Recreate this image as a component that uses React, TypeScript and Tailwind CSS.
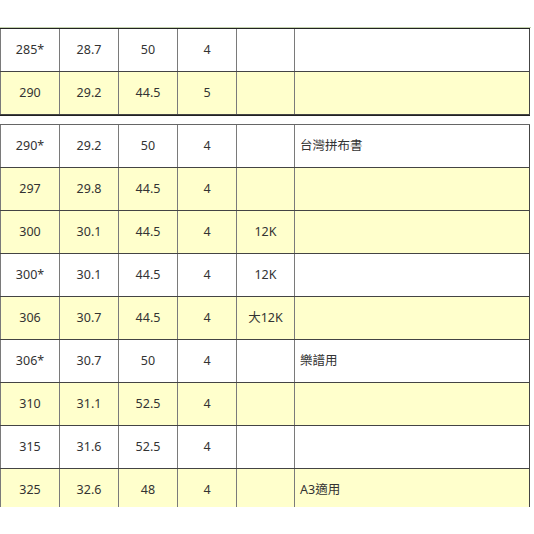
type Row = { cells: string[]; note?: string; yellow?: boolean };

const top: Row[] = [
  { cells: ["285*", "28.7", "50", "4", ""] },
  { cells: ["290", "29.2", "44.5", "5", ""], yellow: true },
];

const rows: Row[] = [
  { cells: ["290*", "29.2", "50", "4", ""], note: "台灣拼布書" },
  { cells: ["297", "29.8", "44.5", "4", ""], yellow: true },
  { cells: ["300", "30.1", "44.5", "4", "12K"], yellow: true },
  { cells: ["300*", "30.1", "44.5", "4", "12K"] },
  { cells: ["306", "30.7", "44.5", "4", "大12K"], yellow: true },
  { cells: ["306*", "30.7", "50", "4", ""], note: "樂譜用" },
  { cells: ["310", "31.1", "52.5", "4", ""], yellow: true },
  { cells: ["315", "31.6", "52.5", "4", ""] },
  { cells: ["325", "32.6", "48", "4", ""], note: "A3適用", yellow: true },
];

function TableRow({ row }: { row: Row }) {
  return (
    <div
      className={`grid h-[43px] grid-cols-[60px_59px_59px_59px_58px_235px] border-b border-[#444] ${
        row.yellow ? "bg-[#ffffcc]" : "bg-white"
      }`}
    >
      {row.cells.map((c, i) => (
        <div
          key={i}
          className={`flex items-center justify-center border-r border-[#7a7a7a] ${i === 0 ? "border-l" : ""}`}
        >
          {c}
        </div>
      ))}
      <div className="flex items-center border-r border-[#444] pl-[5px]">{row.note}</div>
    </div>
  );
}

export default function App() {
  return (
    <div
      className="h-[534px] w-[534px] overflow-hidden bg-white text-[12.5px] text-[#333]"
      style={{ fontFamily: '"Noto Sans", "Noto Sans CJK TC", sans-serif' }}
    >
      <div className="h-[27px]" />
      <div className="h-px w-[531px] bg-[#c3d2ad]" />
      <div className="w-[530px] border-t border-b border-[#222]">
        {top.map((r, i) => (
          <TableRow key={i} row={r} />
        ))}
      </div>
      <div className="mt-[8px] h-[383px] w-[530px] overflow-hidden border-t border-[#666]">
        {rows.map((r, i) => (
          <TableRow key={i} row={r} />
        ))}
      </div>
    </div>
  );
}
